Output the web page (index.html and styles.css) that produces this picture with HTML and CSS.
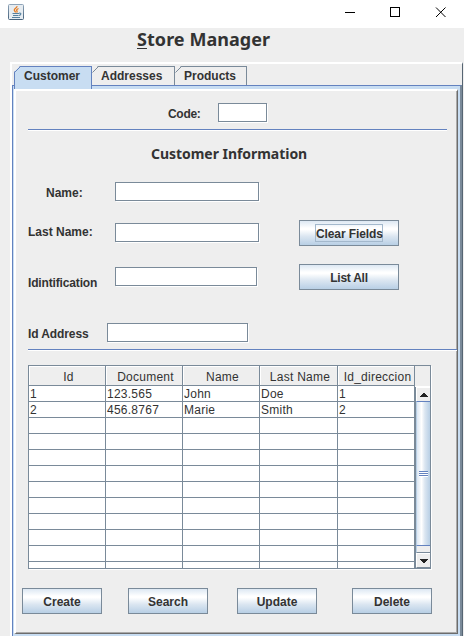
FILE: index.html
```
<!DOCTYPE html>
<html lang="en">
<head>
<meta charset="utf-8">
<title>Store Manager</title>
<link rel="stylesheet" href="styles.css">
</head>
<body>
<div class="window">
  <header class="titlebar">
    <svg class="app-icon" width="16" height="16" viewBox="0 0 16 16">
      <defs><linearGradient id="ig" x1="0" y1="0" x2="0" y2="1"><stop offset="0" stop-color="#8fa4b8"/><stop offset="1" stop-color="#46627c"/></linearGradient></defs>
      <rect x=".5" y=".5" width="15" height="15" rx="1" fill="#e6ecf1" stroke="url(#ig)"/>
      <path d="M9 2.200C9.300 4 6 4.600 6.300 6.200C6.500 7.200 7.600 7.500 7.500 8.500M10.500 4.500C9 5.200 8 6 9 7C9.400 7.600 9 8 8.600 8.500" fill="none" stroke="#e87a1d" stroke-width="1.300"/>
      <path d="M4.500 9.500h6.500M5 11.500h5.500M4 13.500h8M11 9.200c2.500-.8 2.600 1.800 0 2.300" fill="none" stroke="#55809f" stroke-width="1.100"/>
    </svg>
    <svg class="controls" width="102" height="11" viewBox="0 0 102 11" fill="none" stroke="#000">
      <path d="M0 5.500h10"/>
      <rect x="45.500" y=".5" width="9" height="9"/>
      <path d="M91 .5l9.500 9.500M100.500 .5L91 10"/>
    </svg>
  </header>
  <h1 class="title"><span class="mnemonic">S</span>tore Manager</h1>
  <main class="tabs">
    <nav class="tab-strip">
      <div class="tab active"><svg class="corner" width="7" height="7"><path class="cut" d="M0 0h6L0 6z"/><path class="edge" d="M.5 6.500L6.500 .5"/></svg>Customer</div>
      <div class="tab addresses"><svg class="corner" width="7" height="7"><path class="cut" d="M0 0h6L0 6z"/><path class="edge" d="M.5 6.500L6.500 .5"/></svg>Addresses</div>
      <div class="tab products"><svg class="corner" width="7" height="7"><path class="cut" d="M0 0h6L0 6z"/><path class="edge" d="M.5 6.500L6.500 .5"/></svg>Products</div>
    </nav>
    <div class="frame">
      <section class="panel">
        <div class="code-row"><label>Code:</label><span class="field code"></span></div>
        <div class="rule"></div>
        <h2 class="subtitle">Customer Information</h2>
        <div class="form">
          <div class="fields">
            <div class="row name"><label>Name:</label><span class="field"></span></div>
            <div class="row last"><label>Last Name:</label><span class="field"></span></div>
            <div class="row ident"><label>Idintification</label><span class="field"></span></div>
            <div class="row address"><label>Id Address</label><span class="field"></span></div>
          </div>
          <div class="side">
            <button class="btn"><span class="focus">Clear Fields</span></button>
            <button class="btn list">List All</button>
          </div>
        </div>
        <div class="rule wide"></div>
        <div class="table-pane">
          <div class="grid">
            <div class="th">Id</div><div class="th">Document</div><div class="th">Name</div><div class="th">Last Name</div><div class="th">Id_direccion</div>
            <div>1</div><div>123.565</div><div>John</div><div>Doe</div><div>1</div>
            <div>2</div><div>456.8767</div><div>Marie</div><div>Smith</div><div>2</div>
            <div></div><div></div><div></div><div></div><div></div>
            <div></div><div></div><div></div><div></div><div></div>
            <div></div><div></div><div></div><div></div><div></div>
            <div></div><div></div><div></div><div></div><div></div>
            <div></div><div></div><div></div><div></div><div></div>
            <div></div><div></div><div></div><div></div><div></div>
            <div></div><div></div><div></div><div></div><div></div>
            <div></div><div></div><div></div><div></div><div></div>
            <div></div><div></div><div></div><div></div><div></div>
            <div class="cut-row"></div><div class="cut-row"></div><div class="cut-row"></div><div class="cut-row"></div><div class="cut-row"></div>
          </div>
          <div class="scroll">
            <div class="scroll-head"></div>
            <div class="arrow"><svg width="8" height="4"><path d="M3 0h2v1h1v1h1v1h1v1H0V3h1V2h1V1h1z"/></svg></div>
            <div class="thumb"><i></i><i></i><i></i></div>
            <div class="track"></div>
            <div class="arrow down"><svg width="8" height="4"><path d="M0 0h8v1H7v1H6v1H5v1H3V3H2V2H1V1H0z"/></svg></div>
          </div>
        </div>
        <div class="actions">
          <button class="btn">Create</button>
          <button class="btn">Search</button>
          <button class="btn">Update</button>
          <button class="btn">Delete</button>
        </div>
      </section>
    </div>
  </main>
</div>
</body>
</html>
```
FILE: styles.css
```
* { box-sizing: border-box; }
body { margin: 0; font: bold 12px/14px "Liberation Sans", Arial, sans-serif; color: #333; }
.window { width: 464px; height: 636px; background: #eee; overflow: hidden; }

.titlebar { height: 28px; background: #fff; display: flex; justify-content: space-between; align-items: flex-start; padding: 4px 17px 0 8px; }
.app-icon { display: block; }
.controls { display: block; margin-top: 3px; }

.title { margin: 0; height: 34px; padding-left: 137px; font: bold 18px/22px "Noto Sans", sans-serif; letter-spacing: .05px; white-space: nowrap; }
.mnemonic { text-decoration: underline; text-decoration-thickness: 1px; text-underline-offset: 2px; }

.tabs { margin-left: 10px; width: 453px; height: 574px; border: solid #fff; border-width: 2px 0 0 2px; border-right: 1px solid #566573; display: flex; flex-direction: column; }
.tab-strip { height: 21px; padding: 2px 0 0 2px; display: flex; flex: none; }
.tab { position: relative; height: 19px; border: 1px solid #7a8a99; border-left: 0; border-bottom: 0; line-height: 19px; padding-left: 9px; }
.active { width: 78px; height: 23px; border-color: #6382bf; border-left: 1px solid #6382bf; background: #c8ddf2; z-index: 1; margin-bottom: -4px; }
.addresses { width: 83px; }
.products { width: 72px; }
.corner { position: absolute; left: 0; top: -1px; }
.active .corner { left: -1px; }
.cut { fill: #eee; }
.edge { fill: none; stroke: #7a8a99; }
.active .edge { stroke: #6382bf; }

.frame { flex: 1; border-top: 1px solid #6382bf; border-left: 1px solid #6382bf; border-right: 2px solid #7a8a99; background: #c8ddf2; padding: 3px 2px 2px 1px; }
.panel { height: 545px; background: #eee; border-style: solid; border-width: 2px 1px 1px 2px; border-color: #fff #6c6c6c #6c6c6c #fff; box-shadow: inset -1px -1px #aaa; padding-left: 12px; }

.field { display: block; height: 19px; background: #fff; border: 1px solid #7a8a99; box-shadow: 1px 1px #fff; }
.code-row { height: 38px; padding: 12px 0 0 140px; display: flex; align-items: flex-start; }
.code-row label { width: 50px; padding-top: 4px; letter-spacing: -.3px; }
.code { width: 49px; }
.rule { width: 419px; height: 2px; background: #6382bf; border-bottom: 1px solid #fff; }
.wide { width: 429px; }
.subtitle { margin: 0; height: 51px; padding: 13px 0 0 123px; font: bold 14px/20px "Noto Sans", sans-serif; letter-spacing: -.04px; white-space: nowrap; }

.form { display: flex; height: 167px; }
.fields { width: 271px; }
.row { display: flex; align-items: flex-start; }
.row label { width: 87px; white-space: nowrap; }
.row .field { width: 144px; }
.name { height: 41px; }
.name label { padding: 4px 0 0 18px; }
.last { height: 44px; }
.last label { padding-top: 2px; }
.ident { height: 56px; }
.ident label { padding-top: 9px; letter-spacing: -.15px; }
.ident .field { width: 142px; }
.address label { width: 79px; padding-top: 4px; letter-spacing: -.1px; }
.address .field { width: 141px; }

.side { display: flex; flex-direction: column; gap: 18px; padding-top: 38px; }
.btn { width: 80px; height: 26px; padding: 2px 0 0; border: 1px solid #7a8a99; border-radius: 0; font: inherit; color: #333; background: linear-gradient(#dde8f3 0, #fff 30%, #fff 36%, #dbe6f1 64%, #b8cfe5); display: flex; align-items: center; justify-content: center; }
.side .btn { width: 100px; }
.list { letter-spacing: -.25px; }
.focus { border: 1px solid #a3b8cc; width: 68px; height: 18px; line-height: 18px; margin-top: -2px; letter-spacing: -.1px; white-space: nowrap; }

.table-pane { margin-top: 14px; width: 403px; height: 204px; background: #fff; border: 1px solid #7a8a99; box-shadow: 1px 1px #fff; display: flex; }
.grid { width: 386px; display: grid; grid-template-columns: 77px 77px 77px 78px 77px; grid-template-rows: 20px repeat(11, 16px) 6px; font-weight: normal; letter-spacing: .25px; }
.grid > div { border-right: 1px solid #7a8a99; border-bottom: 1px solid #7a8a99; padding-left: 1px; line-height: 17px; white-space: nowrap; }
.grid > .th { background: #eee; text-align: center; line-height: 22px; box-shadow: inset 1px 1px #fff; padding-left: 3px; }
.grid > .cut-row { border-bottom: 0; }
.scroll { width: 15px; display: flex; flex-direction: column; background: #eee; border-left: 1px solid #7a8a99; }
.scroll-head { height: 21px; margin-left: -1px; background: #eee; border-bottom: 1px solid #fff; }
.arrow { height: 14px; border: solid #fff; border-width: 1px 0 0 1px; display: flex; justify-content: center; align-items: center; }
.arrow svg { fill: #222; display: block; }
.thumb { height: 145px; border: solid #6382bf; border-width: 1px 0; border-left: 1px solid #b8cfe5; background: linear-gradient(90deg, #dce7f3, #fff 35%, #dbe6f1 60%, #b8cfe5); display: flex; flex-direction: column; justify-content: center; align-items: center; }
.thumb i { width: 9px; height: 2px; background: #6382bf; border-bottom: 1px solid #fff; }
.track { height: 7px; border-left: 1px solid #b8cfe5; border-bottom: 1px solid #7a8a99; }
.down { height: 15px; border-bottom: 1px solid #7a8a99; }

.actions { display: flex; padding-top: 19px; margin-left: -6px; }
.actions .btn:nth-child(2) { margin-left: 26px; }
.actions .btn:nth-child(3) { margin-left: 29px; }
.actions .btn:nth-child(4) { margin-left: 35px; }
```
